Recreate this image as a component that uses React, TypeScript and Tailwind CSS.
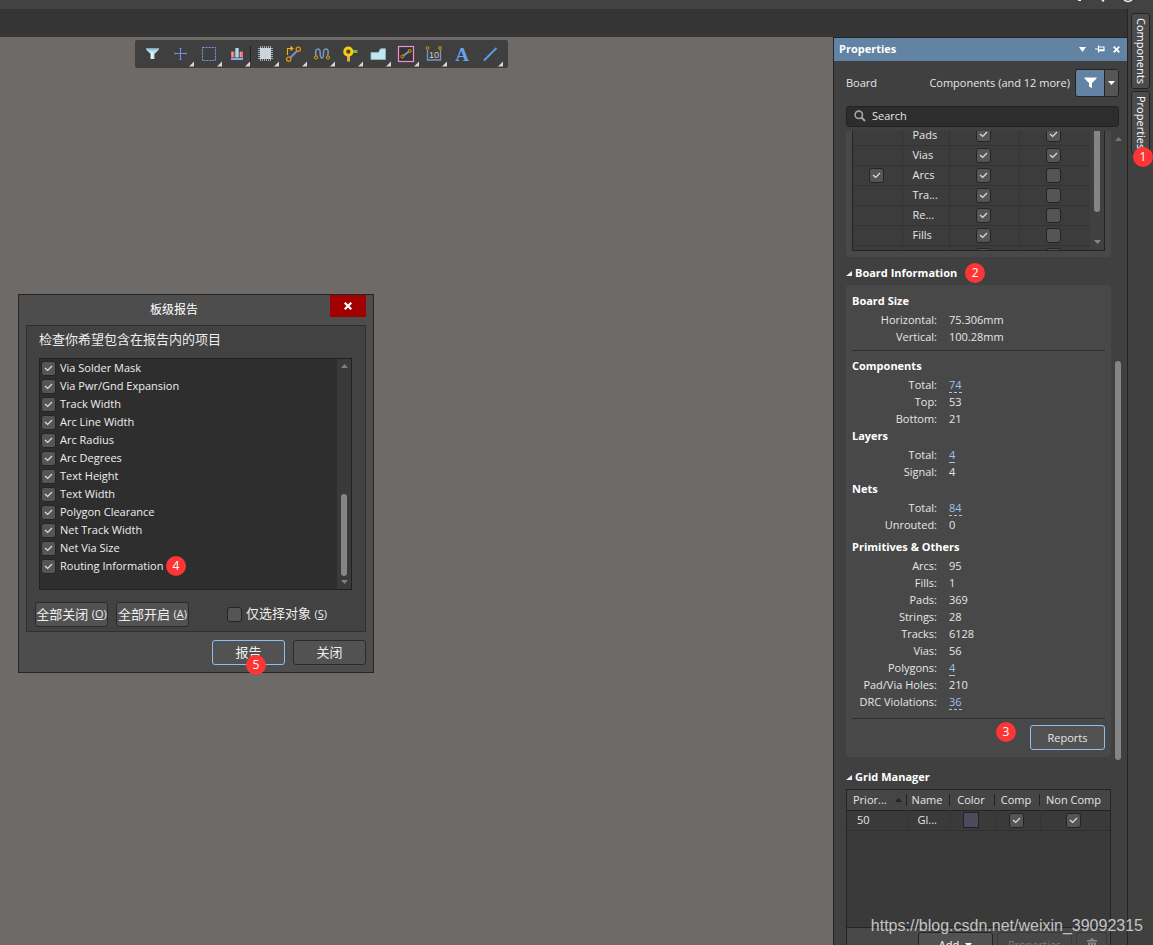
import { useState } from "react";
import type { ReactNode } from "react";

const REPORT_ITEMS = [
  "Via Solder Mask",
  "Via Pwr/Gnd Expansion",
  "Track Width",
  "Arc Line Width",
  "Arc Radius",
  "Arc Degrees",
  "Text Height",
  "Text Width",
  "Polygon Clearance",
  "Net Track Width",
  "Net Via Size",
  "Routing Information",
];

const OBJECT_ROWS = [
  { name: "Pads", group: false, first: true, second: true },
  { name: "Vias", group: false, first: true, second: true },
  { name: "Arcs", group: true, first: true, second: false },
  { name: "Tra...", group: false, first: true, second: false },
  { name: "Re...", group: false, first: true, second: false },
  { name: "Fills", group: false, first: true, second: false },
  { name: "", group: false, first: true, second: false },
];

type Stat = { label: string; value: string; link?: boolean };

const SIZE_STATS: Stat[] = [
  { label: "Horizontal:", value: "75.306mm" },
  { label: "Vertical:", value: "100.28mm" },
];
const COMPONENT_STATS: Stat[] = [
  { label: "Total:", value: "74", link: true },
  { label: "Top:", value: "53" },
  { label: "Bottom:", value: "21" },
];
const LAYER_STATS: Stat[] = [
  { label: "Total:", value: "4", link: true },
  { label: "Signal:", value: "4" },
];
const NET_STATS: Stat[] = [
  { label: "Total:", value: "84", link: true },
  { label: "Unrouted:", value: "0" },
];
const PRIMITIVE_STATS: Stat[] = [
  { label: "Arcs:", value: "95" },
  { label: "Fills:", value: "1" },
  { label: "Pads:", value: "369" },
  { label: "Strings:", value: "28" },
  { label: "Tracks:", value: "6128" },
  { label: "Vias:", value: "56" },
  { label: "Polygons:", value: "4", link: true },
  { label: "Pad/Via Holes:", value: "210" },
  { label: "DRC Violations:", value: "36", link: true },
];

function Check({ id, label, initial }: { id?: string; label?: string; initial: boolean }) {
  const [on, setOn] = useState(initial);
  return (
    <span className="relative inline-block size-[15px] shrink-0 align-top">
      <input
        id={id}
        type="checkbox"
        aria-label={label}
        checked={on}
        onChange={(e) => setOn(e.target.checked)}
        className="block size-[15px] appearance-none rounded-[3px] border border-[#242424] bg-[#555]"
      />
      {on ? (
        <svg viewBox="0 0 15 15" className="pointer-events-none absolute inset-0 size-[15px]">
          <path d="M4 7 L6.7 9.5 L11 5" fill="none" stroke="#dedede" strokeWidth="1.2" />
        </svg>
      ) : null}
    </span>
  );
}

function Badge({ n, className }: { n: number; className: string }) {
  return (
    <span
      className={`absolute z-10 flex size-5 items-center justify-center rounded-full bg-[#fd3535] text-xs text-white ${className}`}
    >
      {n}
    </span>
  );
}

function Triangle({ up, className }: { up?: boolean; className?: string }) {
  return (
    <svg viewBox="0 0 7 4" className={`h-1 w-[7px] shrink-0 ${className ?? ""}`}>
      <path d={up ? "M0 4 L3.5 0 L7 4 Z" : "M0 0 L7 0 L3.5 4 Z"} fill="currentColor" />
    </svg>
  );
}

function Funnel({ className }: { className: string }) {
  return (
    <svg viewBox="0 0 13 12" className={className}>
      <path d="M0.5 0.5 H12.5 V1.5 L8 6 V11 L5 9.5 V6 L0.5 1.5 Z" fill="currentColor" />
    </svg>
  );
}

function Tool({ label, menu = true, children }: { label: string; menu?: boolean; children: ReactNode }) {
  return (
    <button type="button" aria-label={label} className="size-7 hover:bg-[#4d4d4d]">
      <svg viewBox="0 0 28 28" className="size-7">
        {children}
        {menu ? <path d="M28 21.5 V26.5 H23 Z" fill="#d6d6d6" /> : null}
      </svg>
    </button>
  );
}

function Toolbar() {
  return (
    <div className="absolute top-[3px] left-[135px] flex rounded-[2px] bg-[#3f3f3f] pr-[5px] pl-[3px]">
      <Tool label="Filter" menu={false}>
        <path d="M8 8 H21 V9.5 L16.5 14 V19 H12.5 V14 L8 9.5 Z" fill="#b5dbe8" />
        <path d="M8 8 H21 V9.5 H8 Z" fill="#7fa9bd" />
        <path d="M13 12 H15 V19 H13 Z" fill="#e6f6fa" />
      </Tool>
      <Tool label="Move">
        <path
          d="M14.5 8 V20 M8.5 13.5 H20.5 M13.5 8.5 H15.5 M13.5 19.5 H15.5 M9 12.5 V14.5 M20 12.5 V14.5"
          stroke="#6f8fdc"
          strokeWidth="1.1"
          fill="none"
        />
      </Tool>
      <Tool label="Select area">
        <rect x="8.5" y="7.5" width="13" height="13" fill="none" stroke="#7795e6" strokeWidth="1.1" strokeDasharray="2 1" />
      </Tool>
      <Tool label="Align">
        <path d="M9 11.5 H12.5 V17.5 H9 Z M17.5 11.5 H21 V17.5 H17.5 Z" fill="#e36f72" />
        <path d="M10.3 12 V17 M18.8 12 V17" stroke="#f5a5a5" />
        <path d="M13.3 8 H16.7 V17.5 H13.3 Z" fill="#a9d9e8" />
        <path d="M9 18 H21 V20 H9 Z" fill="#8ba7ec" />
      </Tool>
      <span className="h-4 w-px self-center bg-[#222]" />
      <Tool label="Place component">
        <path
          d="M9.5 6 V21 M11.5 6 V21 M13.5 6 V21 M15.5 6 V21 M17.5 6 V21 M19.5 6 V21 M7 8.5 H22 M7 10.5 H22 M7 12.5 H22 M7 14.5 H22 M7 16.5 H22 M7 18.5 H22"
          stroke="#a9bac3"
          strokeWidth="0.9"
        />
        <rect x="9" y="8" width="11" height="11" fill="#ccd5da" />
      </Tool>
      <Tool label="Route track">
        <path d="M11 18 L18 11" stroke="#6f8fc0" strokeWidth="2.2" />
        <circle cx="19.3" cy="9.3" r="2.1" fill="#473c24" stroke="#d8960d" strokeWidth="1.3" />
        <circle cx="9.7" cy="19.3" r="2.1" fill="#473c24" stroke="#d8960d" strokeWidth="1.3" />
        <path d="M8.5 15 V8.5 H12" stroke="#f2b21c" strokeWidth="1.1" fill="none" />
        <path d="M11.5 5.8 L14.8 8.5 L11.5 11.2 Z" fill="#f2b21c" />
      </Tool>
      <Tool label="Tune length">
        <path
          d="M9 16 C8 11 9 9 11 9 C13 9 13.2 11 13.2 13 C13.2 16 13.5 18 15 18 C16.5 18 16.5 16 16.5 13 C16.5 11 17 9 19 9 C21 9 22 11 20.5 16"
          fill="none"
          stroke="#7795bd"
          strokeWidth="1.6"
        />
        <circle cx="9" cy="17.5" r="1.5" fill="#473c24" stroke="#d8960d" strokeWidth="1.1" />
        <circle cx="21" cy="17.5" r="1.5" fill="#473c24" stroke="#d8960d" strokeWidth="1.1" />
      </Tool>
      <Tool label="Place pad">
        <path d="M17 10 H22.5 V13 H17 Z" fill="#67bb3b" />
        <path d="M12 15.5 H15 V21.5 H12 Z" fill="#efa050" />
        <circle cx="13.3" cy="11.7" r="3.6" fill="#4b4330" stroke="#f5cb16" strokeWidth="3" />
      </Tool>
      <Tool label="Place polygon">
        <path d="M8 12.5 H15.5 L17.5 8.7 H22.5 V19.5 H8 Z" fill="#c2e6ef" stroke="#8fb6c8" strokeWidth="0.8" />
      </Tool>
      <Tool label="Place room">
        <rect x="7.5" y="6.5" width="15" height="15" fill="#343434" stroke="#f08fd8" strokeWidth="1.2" />
        <path d="M12 16 L18 11.5" stroke="#7795bd" strokeWidth="2" />
        <circle cx="11.3" cy="16.5" r="1.5" fill="#473c24" stroke="#d8960d" />
        <circle cx="18.7" cy="11" r="1.5" fill="#473c24" stroke="#d8960d" />
      </Tool>
      <Tool label="Place dimension">
        <path d="M8.5 9.5 V20 H21.5 V9.5" fill="none" stroke="#7795bd" strokeWidth="1.3" />
        <circle cx="8.5" cy="8" r="1.4" fill="#473c24" stroke="#d8960d" />
        <circle cx="21" cy="8" r="1.4" fill="#473c24" stroke="#d8960d" />
        <text x="15" y="17.5" textAnchor="middle" fontSize="9" fill="#cfcfcf" className="font-['Liberation_Sans',sans-serif]">
          10
        </text>
      </Tool>
      <Tool label="Place text" menu={false}>
        <text
          x="15"
          y="21"
          textAnchor="middle"
          fontSize="19"
          fontWeight="700"
          fill="#66a3ea"
          className="font-['Liberation_Serif',serif]"
        >
          A
        </text>
      </Tool>
      <Tool label="Place line">
        <path d="M9 20.5 L21.5 8" stroke="#5c9ce0" strokeWidth="2" />
      </Tool>
    </div>
  );
}

function ReportDialog() {
  const button =
    "flex h-[25px] w-[73px] items-center justify-center rounded-[3px] border bg-[#525252] pb-0.5 whitespace-nowrap hover:bg-[#5c5c5c]";
  return (
    <section
      role="dialog"
      aria-labelledby="report-title"
      className="absolute top-[257px] left-[18px] w-[356px] border border-[#252525] bg-[#4d4d4d] px-[7px] pb-[7px] text-[13px] leading-5 text-[#eee]"
    >
      <header className="flex h-[30px]">
        <h2 id="report-title" className="flex-1 pt-[5px] pr-2 text-center text-xs leading-5 text-white">
          板级报告
        </h2>
        <button
          type="button"
          aria-label="Close"
          className="flex h-[22px] w-9 items-center justify-center bg-[#a10000] hover:bg-[#c00]"
        >
          <svg viewBox="0 0 8 8" className="size-2">
            <path d="M0.7 0.7 L7.3 7.3 M7.3 0.7 L0.7 7.3" stroke="#fff" strokeWidth="2.2" />
          </svg>
        </button>
      </header>

      <div className="border border-[#303030] bg-[#424242] px-2 pb-1">
        <p className="px-1 pt-[3px] pb-[9px] leading-5">检查你希望包含在报告内的项目</p>
        <div className="mr-[5px] mb-3 ml-1 flex h-[232px] border border-[#212121] bg-[#2e2e2e] text-[11px]">
          <ul className="flex-1 px-px">
            {REPORT_ITEMS.map((item, i) => (
              <li key={item} className="flex h-[18px] items-center gap-1 leading-4">
                <Check id={`report-${i}`} initial />
                <label htmlFor={`report-${i}`} className="relative">
                  {item}
                  {item === "Routing Information" ? <Badge n={4} className="-top-0.5 left-[106px]" /> : null}
                </label>
              </li>
            ))}
          </ul>
          <div className="flex w-3.5 flex-col items-center bg-[#3a3a3a] pt-[5px] pb-[5px] text-[#808080]">
            <Triangle up />
            <span className="mt-auto mb-1 h-[82px] w-1.5 rounded-full bg-[#858585]" />
            <Triangle />
          </div>
        </div>
        <div className="flex h-[25px] items-center gap-2">
          <button type="button" className={`${button} border-[#2a2a2a]`}>
            全部关闭&nbsp;<span className="text-[11px]">(<u>O</u>)</span>
          </button>
          <button type="button" className={`${button} border-[#2a2a2a]`}>
            全部开启&nbsp;<span className="text-[11px]">(<u>A</u>)</span>
          </button>
          <div className="ml-[30px] flex items-center gap-1">
            <Check id="selected-only" initial={false} />
            <label htmlFor="selected-only" className="pb-0.5">
              仅选择对象 <span className="text-[11px]">(<u>S</u>)</span>
            </label>
          </div>
        </div>
      </div>

      <footer className="mt-2 flex justify-end gap-2">
        <button type="button" className={`${button} relative border-[#8fbdf0]`}>
          报告
          <Badge n={5} className="top-3.5 left-[33px]" />
        </button>
        <button type="button" className={`${button} border-[#2a2a2a]`}>
          关闭
        </button>
      </footer>
    </section>
  );
}

function StatSection({ title, rows }: { title: string; rows: Stat[] }) {
  return (
    <section>
      <h3 className="mb-[3px] h-4 leading-4 font-bold text-white">{title}</h3>
      <dl>
        {rows.map((row) => (
          <div key={row.label} className="flex h-[17px] gap-3 leading-4">
            <dt className="w-[85px] text-right whitespace-nowrap">{row.label}</dt>
            <dd>
              {row.link ? (
                <a href="#details" className="block h-4 border-b border-dashed border-[#a9c3e6] text-[#a3bfe8]">
                  {row.value}
                </a>
              ) : (
                row.value
              )}
            </dd>
          </div>
        ))}
      </dl>
    </section>
  );
}

function SectionTitle({ children }: { children: ReactNode }) {
  return (
    <h2 className="flex items-center gap-[3px] leading-4 font-bold text-white">
      <svg viewBox="0 0 6 5" className="h-[5px] w-1.5">
        <path d="M6 0 V5 H0 Z" fill="#eee" />
      </svg>
      {children}
    </h2>
  );
}

function ObjectTable() {
  const checkCell = "p-0 pr-0.5 text-center leading-none";
  return (
    <div className="rounded-b-[4px] bg-[#484848] px-1.5 pb-1.5">
      <div className="flex h-[120px] overflow-hidden border border-t-0 border-[#242424] bg-[#3c3c3c]">
        <table className="-mt-1.5 flex-1 table-fixed border-collapse self-start">
          <colgroup>
            <col className="w-[49px]" />
            <col className="w-[47px]" />
            <col className="w-[70px]" />
            <col className="w-[71px]" />
          </colgroup>
          <tbody>
            {OBJECT_ROWS.map((row, i) => (
              <tr key={i} className="h-5 border-b border-[#343434]">
                <td className={`${checkCell} border-r border-[#343434]`}>
                  {row.group ? <Check label={`${row.name} group`} initial /> : null}
                </td>
                <td className="border-r border-[#343434] p-0 pl-2.5 leading-4">{row.name}</td>
                <td className={`${checkCell} border-r border-[#343434]`}>
                  <Check label={`${row.name} column 1`} initial={row.first} />
                </td>
                <td className={checkCell}>
                  <Check label={`${row.name} column 2`} initial={row.second} />
                </td>
              </tr>
            ))}
          </tbody>
        </table>
        <div className="flex w-3.5 flex-col items-center bg-[#404040] text-[#858585]">
          <span className="h-[81px] w-1.5 rounded-b-full bg-[#858585]" />
          <Triangle className="mt-auto mb-1.5" />
        </div>
      </div>
    </div>
  );
}

function GridManager() {
  const head = "relative p-0 pr-[3px] text-center font-normal";
  const rule = <span className="absolute top-1 right-0 h-3 w-px bg-[#222]" />;
  const cell = "border-r border-[#353535] p-0 pr-[3px] text-center leading-none";
  return (
    <div className="border border-[#242424] bg-[#484848]">
      <div className="h-[138px] border-b border-[#242424] bg-[#3a3a3a]">
        <table className="w-full table-fixed border-collapse">
          <colgroup>
            <col className="w-[60px]" />
            <col className="w-[43px]" />
            <col className="w-[45px]" />
            <col className="w-[45px]" />
            <col />
          </colgroup>
          <thead>
            <tr className="h-5 border-b border-[#242424] bg-[#454545] leading-4">
              <th className={head}>
                <span className="flex items-center gap-2 pl-1.5">
                  Prior...
                  <Triangle up className="text-[#222]" />
                </span>
                {rule}
              </th>
              <th className={head}>Name{rule}</th>
              <th className={head}>Color{rule}</th>
              <th className={head}>Comp{rule}</th>
              <th className={head}>Non Comp</th>
            </tr>
          </thead>
          <tbody>
            <tr className="h-5 border-b border-[#303030]">
              <td className="border-r border-[#353535] p-0 pl-2.5 leading-4">50</td>
              <td className="border-r border-[#353535] p-0 pl-2.5 leading-4">Gl...</td>
              <td className={cell}>
                <button
                  type="button"
                  aria-label="Grid color"
                  className="inline-block size-4 border border-[#222] bg-[#4c4b5c] align-top"
                />
              </td>
              <td className={cell}>
                <Check label="Comp" initial />
              </td>
              <td className="p-0 pr-[3px] text-center leading-none">
                <Check label="Non Comp" initial />
              </td>
            </tr>
          </tbody>
        </table>
      </div>
      <div className="flex justify-end gap-1 p-1 pr-[3px]">
        <button
          type="button"
          className="flex h-[25px] w-[75px] items-center justify-center gap-1.5 rounded-[3px] border border-[#242424] bg-[#525252] text-white"
        >
          Add
          <Triangle />
        </button>
        <button
          type="button"
          disabled
          className="h-[25px] w-[75px] rounded-[3px] border border-[#3a3a3a] bg-[#484848] text-[#7c7c7c]"
        >
          Properties
        </button>
        <button
          type="button"
          disabled
          aria-label="Delete"
          className="flex h-[25px] w-[31px] items-center justify-center rounded-[3px] border border-[#3a3a3a] bg-[#484848]"
        >
          <svg viewBox="0 0 10 13" className="h-[13px] w-2.5">
            <path d="M3.5 0.5 H6.5 V2 H10 V3.5 H0 V2 H3.5 Z M1 4.5 H9 V13 H1 Z" fill="#8a8a8a" />
            <path d="M3.5 5.5 V12 M6.5 5.5 V12" stroke="#484848" />
          </svg>
        </button>
      </div>
    </div>
  );
}

function PropertiesPanel() {
  return (
    <aside className="flex w-[294px] shrink-0 flex-col border-t border-l border-[#242424] bg-[#404040]">
      <header className="flex h-[23px] shrink-0 items-center gap-2 bg-[#6283a3] pr-[7px] pb-px pl-[5px] text-white">
        <h1 className="flex-1 font-bold">Properties</h1>
        <button type="button" aria-label="Panel menu" className="flex w-2.5 justify-center">
          <svg viewBox="0 0 7 5" className="h-[5px] w-[7px]">
            <path d="M0 0 H7 L3.5 5 Z" fill="#fff" />
          </svg>
        </button>
        <button type="button" aria-label="Pin panel">
          <svg viewBox="0 0 10 8" className="h-2 w-2.5">
            <path d="M0 4 H4 M3.5 0.5 V7.5 M3.5 2 H9 V5" stroke="#fff" strokeWidth="1.1" fill="none" />
            <path d="M3.5 4.2 H9.5 V6.3 H3.5 Z" fill="#fff" />
          </svg>
        </button>
        <button type="button" aria-label="Close panel">
          <svg viewBox="0 0 7 7" className="size-[7px]">
            <path d="M0.7 0.7 L6.3 6.3 M6.3 0.7 L0.7 6.3" stroke="#fff" strokeWidth="1.8" />
          </svg>
        </button>
      </header>

      <div className="flex items-center pt-2 pr-2 pl-3">
        <span className="flex-1">Board</span>
        <span className="mr-[5px]">Components (and 12 more)</span>
        <div className="flex h-7 w-11 overflow-hidden rounded-[3px] border border-[#242424]">
          <button
            type="button"
            aria-label="Filter"
            className="flex flex-1 items-center justify-center border-r border-[#242424] bg-[#6283a3] text-white"
          >
            <Funnel className="h-3 w-[13px]" />
          </button>
          <button
            type="button"
            aria-label="Filter options"
            className="flex w-[13px] items-center justify-center bg-[#555] text-white"
          >
            <Triangle />
          </button>
        </div>
      </div>

      <div className="mt-[9px] mr-2 ml-3 flex h-[21px] shrink-0 items-center gap-1.5 rounded-[3px] border border-[#222] bg-[#2d2d2d] px-[7px] pb-px">
        <svg viewBox="0 0 12 12" className="size-3">
          <circle cx="4.8" cy="4.8" r="3.7" fill="none" stroke="#a5a5a5" strokeWidth="1.6" />
          <path d="M7.5 7.5 L11 11" stroke="#a5a5a5" strokeWidth="2" />
        </svg>
        <input
          type="text"
          aria-label="Search"
          placeholder="Search"
          className="min-w-0 flex-1 bg-transparent outline-none placeholder:text-[#e6e6e6]"
        />
      </div>

      <div className="mt-1 flex min-h-0 flex-1 pl-3">
        <div className="min-w-0 flex-1 overflow-hidden">
          <ObjectTable />
          <div className="flex items-center gap-2 pt-2 pb-1">
            <SectionTitle>Board Information</SectionTitle>
            <span className="relative h-4 w-5">
              <Badge n={2} className="-top-0.5 left-0" />
            </span>
          </div>
          <div className="rounded-[4px] bg-[#484848] px-1.5 pt-2 pb-[7px]">
            <StatSection title="Board Size" rows={SIZE_STATS} />
            <hr className="mt-1 mb-[7px] border-[#2e2e2e]" />
            <StatSection title="Components" rows={COMPONENT_STATS} />
            <StatSection title="Layers" rows={LAYER_STATS} />
            <StatSection title="Nets" rows={NET_STATS} />
            <div className="mt-[5px]">
              <StatSection title="Primitives & Others" rows={PRIMITIVE_STATS} />
            </div>
            <hr className="mt-[7px] mb-1.5 border-[#2e2e2e]" />
            <div className="flex justify-end">
              <button
                type="button"
                className="relative h-[25px] w-[75px] rounded-[3px] border border-[#8fbdf0] bg-[#525252] hover:bg-[#5c5c5c]"
              >
                Reports
                <Badge n={3} className="-top-1 right-[88px]" />
              </button>
            </div>
          </div>
          <div className="pt-3 pb-1">
            <SectionTitle>Grid Manager</SectionTitle>
          </div>
          <GridManager />
        </div>
        <div className="flex w-4 flex-col items-center pt-1.5 pr-0.5 text-[#757575]">
          <Triangle up />
          <span className="mt-[220px] h-[399px] w-1.5 rounded-full bg-[#858585]" />
        </div>
      </div>
    </aside>
  );
}

function SideTabs() {
  const tab =
    "relative flex w-[19px] items-center justify-center rounded-[3px] border border-[#222] bg-[#4b4b4b] text-white [writing-mode:vertical-rl]";
  return (
    <nav className="flex w-[26px] shrink-0 flex-col items-center gap-0.5 border-l border-[#242424] bg-[#404040] pt-1">
      <button type="button" className={`${tab} h-[76px]`}>
        Components
      </button>
      <button type="button" className={`${tab} h-[63px]`}>
        Properties
        <Badge n={1} className="top-[55px] left-px [writing-mode:horizontal-tb]" />
      </button>
    </nav>
  );
}

export default function App() {
  return (
    <div className="relative flex h-screen flex-col overflow-hidden bg-[#404040] font-['Open_Sans','Noto_Sans_CJK_SC',sans-serif] text-[11px] leading-4 text-[#e6e6e6]">
      <div className="flex h-[9px] shrink-0 justify-end bg-[#424242] pr-4">
        <svg viewBox="0 0 60 3" className="h-[3px] w-[60px]">
          <path d="M1 0 H4 M25 0 L27 1" stroke="#eee" strokeWidth="2" />
          <path d="M47 0 Q51 3 55 0" stroke="#eee" strokeWidth="1.5" fill="none" />
        </svg>
      </div>
      <div className="flex min-h-0 flex-1">
        <div className="flex min-w-0 flex-1 flex-col">
          <div className="h-7 shrink-0 bg-[#353535]" />
          <div className="flex min-h-0 flex-1">
            <main className="relative min-w-0 flex-1 bg-[#6e6a68]">
              <Toolbar />
              <ReportDialog />
            </main>
            <PropertiesPanel />
          </div>
        </div>
        <SideTabs />
      </div>
      <p className="pointer-events-none absolute right-2.5 bottom-[7px] font-['Liberation_Sans',sans-serif] text-base leading-6 text-[#c4c4c4]">
        https://blog.csdn.net/weixin_39092315
      </p>
    </div>
  );
}
